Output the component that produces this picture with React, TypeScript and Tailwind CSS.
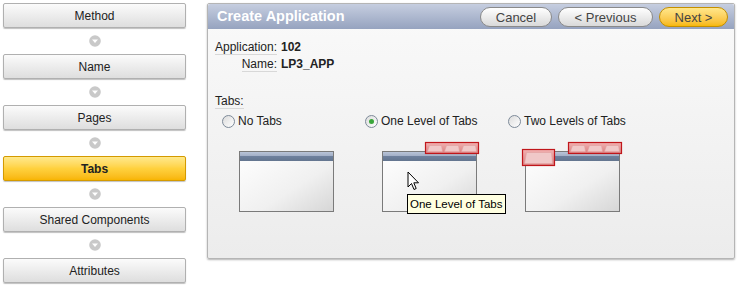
import React from "react";

const STEPS = ["Method", "Name", "Pages", "Tabs", "Shared Components", "Attributes"];
const CURRENT = "Tabs";

function StepArrow() {
  return (
    <div className="flex h-[26px] items-center justify-center">
      <svg width="12" height="12" viewBox="0 0 12 12">
        <circle cx="6" cy="6" r="5.8" fill="#c9c9c9" />
        <path d="M3 4.6 L6 7.9 L9 4.6 Z" fill="#ffffff" />
      </svg>
    </div>
  );
}

function Radio({ checked }: { checked?: boolean }) {
  return (
    <span className="inline-flex h-[13px] w-[13px] items-center justify-center rounded-full border border-[#7d8a99] bg-gradient-to-br from-[#dcdcdc] to-[#ffffff]">
      {checked && <span className="h-[5px] w-[5px] rounded-full bg-[#3aa63a]" />}
    </span>
  );
}

function RedTabs({ x, y, w, h, n }: { x: number; y: number; w: number; h: number; n: number }) {
  const seg = (w - 2) / n;
  return (
    <g>
      <rect x={x} y={y} width={w} height={h} fill="url(#red)" stroke="#c0161b" strokeWidth="1.2" />
      {Array.from({ length: n }).map((_, i) => (
        <path
          key={i}
          d={`M${x + 2 + i * seg} ${y + h - 2} L${x + 4 + i * seg} ${y + 3} L${x + seg - 1 + i * seg} ${y + 3} L${x + seg + i * seg} ${y + h - 2}`}
          fill="#f0c8c8"
          stroke="#e0a0a0"
          strokeWidth="0.6"
        />
      ))}
    </g>
  );
}

function Thumb({ kind }: { kind: "none" | "one" | "two" }) {
  return (
    <svg width="104" height="74" viewBox="0 0 104 74">
      <defs>
        <linearGradient id="body" x1="0" y1="0" x2="1" y2="1">
          <stop offset="0" stopColor="#ffffff" />
          <stop offset="0.6" stopColor="#f0f0f0" />
          <stop offset="1" stopColor="#d6d6d6" />
        </linearGradient>
        <linearGradient id="bar" x1="0" y1="0" x2="0" y2="1">
          <stop offset="0" stopColor="#b9c4d8" />
          <stop offset="0.4" stopColor="#a4b1c8" />
          <stop offset="0.45" stopColor="#6f819e" />
          <stop offset="1" stopColor="#63758f" />
        </linearGradient>
        <linearGradient id="red" x1="0" y1="0" x2="0" y2="1">
          <stop offset="0" stopColor="#f2b0b0" />
          <stop offset="1" stopColor="#d98080" />
        </linearGradient>
      </defs>
      <rect x="4.5" y="11.5" width="94" height="60" fill="url(#body)" stroke="#7a7a7a" />
      <rect x="5" y="12" width="93" height="9" fill="url(#bar)" />
      {kind !== "none" && <RedTabs x={47.5} y={2.5} w={53} h={11} n={3} />}
      {kind === "two" && <RedTabs x={1.5} y={9.5} w={32} h={16} n={1} />}
    </svg>
  );
}

export default function App() {
  return (
    <div className="flex h-[286px] w-[739px] bg-white font-['Liberation_Sans',Arial,sans-serif] text-[12px] text-[#222]">
      {/* Wizard steps */}
      <div className="ml-[3px] mt-[3px] flex w-[183px] flex-col">
        {STEPS.map((s, i) => (
          <React.Fragment key={s}>
            {i > 0 && <StepArrow />}
            <div
              className={`flex h-[25px] items-center justify-center rounded-[2px] border text-[12px] shadow-[0_1px_1px_rgba(0,0,0,0.25)] ${
                s === CURRENT
                  ? "border-[#d49a00] bg-gradient-to-b from-[#ffe98a] via-[#ffd13d] to-[#f8b500] font-bold text-[#222]"
                  : "border-[#b0b0b0] bg-gradient-to-b from-[#fbfbfb] to-[#dedede] text-[#222]"
              }`}
            >
              {s}
            </div>
          </React.Fragment>
        ))}
      </div>

      {/* Main panel */}
      <div className="ml-[21px] mt-[3px] flex h-[256px] w-[528px] flex-col rounded-[2px] border border-[#b5b5b5] bg-gradient-to-b from-[#fafafa] to-[#ececec] shadow-[0_1px_2px_rgba(0,0,0,0.3)]">
        <div className="flex h-[25px] items-center justify-between rounded-t-[2px] bg-gradient-to-b from-[#c6cee0] to-[#96a3bf] pl-[9px] pr-[6px]">
          <h1 className="text-[14.5px] font-bold text-white">Create Application</h1>
          <div className="flex items-center gap-[6px]">
            <button className="h-[20px] w-[72px] rounded-full border border-[#8a8a8a] bg-gradient-to-b from-[#ffffff] to-[#d9d9d9] text-[13px] text-[#444]">
              Cancel
            </button>
            <button className="h-[20px] w-[95px] rounded-full border border-[#8a8a8a] bg-gradient-to-b from-[#ffffff] to-[#d9d9d9] text-[13px] text-[#444]">
              &lt; Previous
            </button>
            <button className="h-[20px] w-[69px] rounded-full border border-[#c48f00] bg-gradient-to-b from-[#ffe78a] to-[#f7b800] text-[13px] text-[#444]">
              Next &gt;
            </button>
          </div>
        </div>

        <div className="pl-[7px] pt-[11px]">
          <div className="grid grid-cols-[62px_auto] gap-x-[4px] gap-y-[2px] leading-[14px]">
            <span className="justify-self-end border-b border-[#d8d8d8]">Application:</span>
            <span className="font-bold">102</span>
            <span className="justify-self-end border-b border-[#d8d8d8]">Name:</span>
            <span className="font-bold">LP3_APP</span>
          </div>

          <div className="mt-[22px] leading-[14px]">
            <span className="border-b border-[#d8d8d8]">Tabs:</span>
          </div>

          <div className="mt-[6px] flex">
            {[
              { label: "No Tabs", kind: "none" as const },
              { label: "One Level of Tabs", kind: "one" as const, checked: true },
              { label: "Two Levels of Tabs", kind: "two" as const },
            ].map((o) => (
              <div key={o.label} className="relative flex w-[143px] flex-col">
                <label className="flex h-[14px] items-center gap-[3px] pl-[7px]">
                  <Radio checked={o.checked} />
                  <span>{o.label}</span>
                </label>
                <div className="mt-[12px] pl-[20px]">
                  <Thumb kind={o.kind} />
                </div>
                {o.kind === "one" && (
                  <>
                    <svg className="absolute left-[49px] top-[57px]" width="13" height="20" viewBox="0 0 13 20">
                      <path d="M1 1 L1 16 L4.5 12.5 L7 18.5 L9.2 17.5 L6.8 11.8 L11.5 11.8 Z" fill="#fff" stroke="#000" strokeWidth="1" strokeLinejoin="round" />
                    </svg>
                    <div className="absolute left-[49px] top-[80px] whitespace-nowrap border border-black bg-[#ffffe1] px-[2px] py-[2px] text-[11.5px] leading-[14px] text-black">
                      One Level of Tabs
                    </div>
                  </>
                )}
              </div>
            ))}
          </div>
        </div>
      </div>
    </div>
  );
}
